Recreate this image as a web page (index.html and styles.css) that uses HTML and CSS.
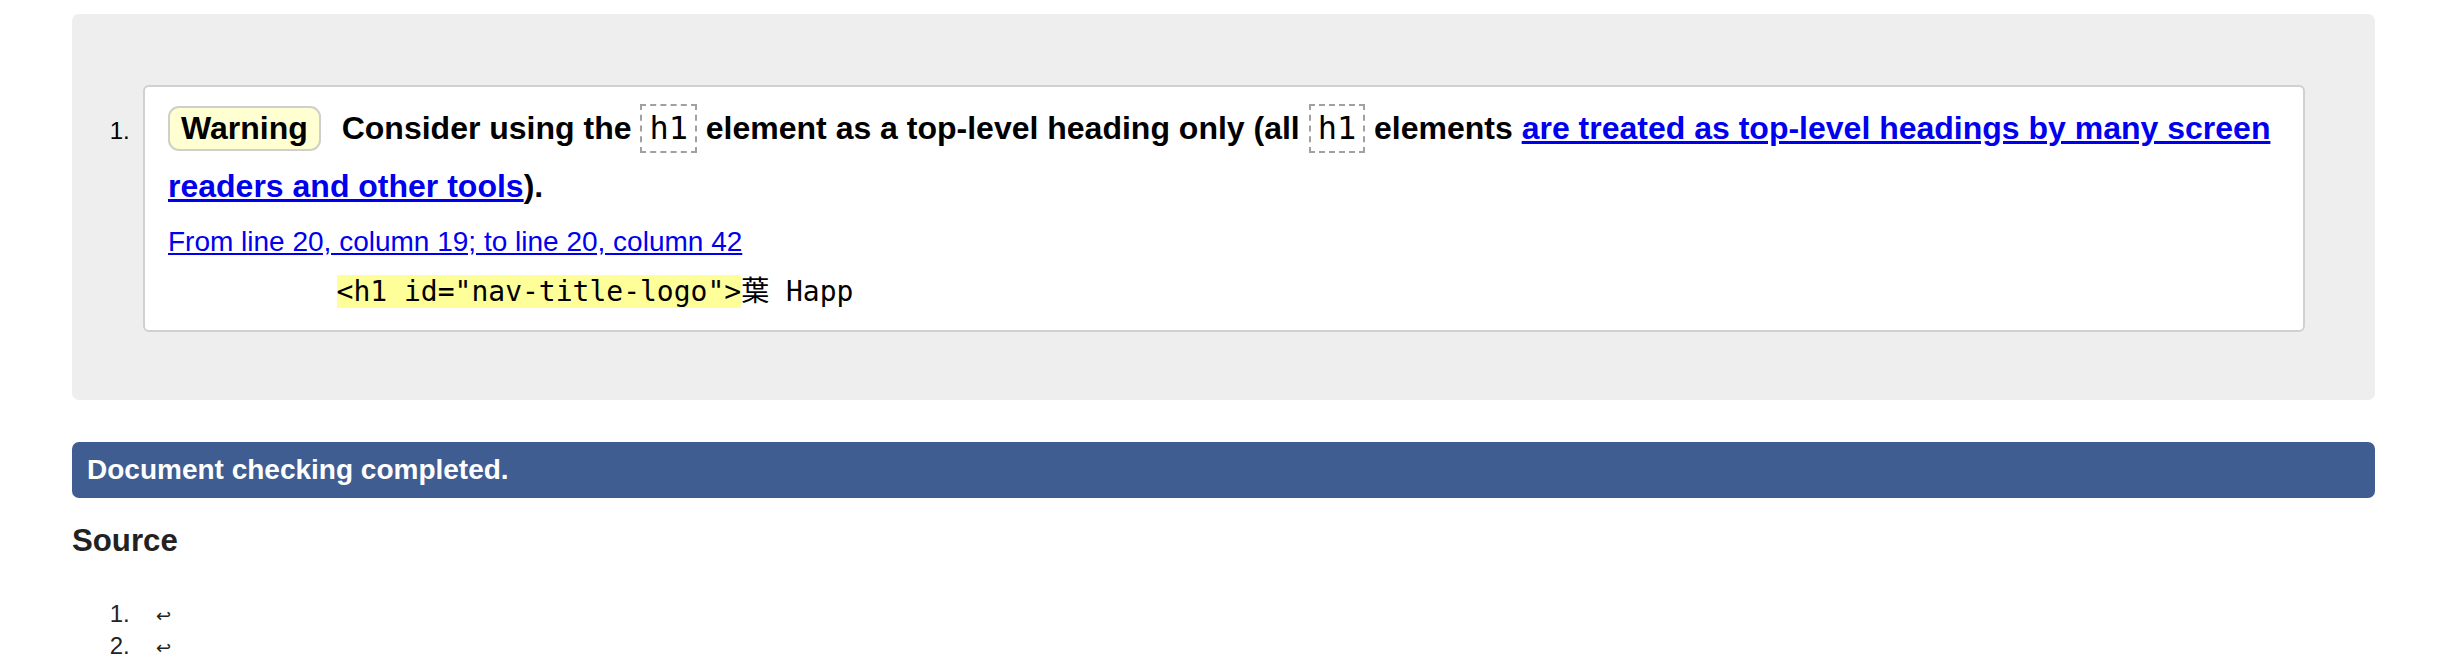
FILE: index.html
```html
<!DOCTYPE html>
<html lang="en">
<head>
<meta charset="utf-8">
<title>Nu Html Checker</title>
<link rel="stylesheet" href="styles.css">
</head>
<body>
<div class="results">
  <ol class="messages">
    <li class="warning">
      <p class="message"><span class="badge">Warning</span> <span class="text">Consider using the <code class="tag">h1</code> element as a top-level heading only (all <code class="tag">h1</code> elements <a href="#">are treated as top-level headings by many screen readers and other tools</a>).</span></p>
      <p class="location"><a href="#">From line 20, column 19; to line 20, column 42</a></p>
      <p class="extract"><code>          <b class="hl">&lt;h1 id="nav-title-logo"&gt;</b>葉 Happ</code></p>
    </li>
  </ol>
</div>
<p class="status">Document checking completed.</p>
<h2 class="source-title">Source</h2>
<ol class="source">
  <li><span class="nl">↩</span></li>
  <li><span class="nl">↩</span></li>
</ol>
</body>
</html>
```

FILE: styles.css
```css
html {
  background: #fff;
}

body {
  margin: 14px 72px 0;
  font-family: "Liberation Sans", Arial, Helvetica, sans-serif;
  font-size: 24px;
  color: #000;
}

.results {
  background: #eee;
  border-radius: 7px;
  padding: 71px 70px 68px 71px;
}

.messages {
  margin: 0;
  padding: 0;
  list-style: decimal outside;
}

.messages > li::marker,
.source > li::marker {
  content: counter(list-item) ".\00a0\00a0";
  font-size: 24px;
}

.messages > li {
  background: #fff;
  border: 2px solid #d0d0d0;
  border-radius: 6px;
  padding: 13px 23px 21px 23px;
}

.message {
  margin: 0;
  font-size: 32px;
  font-weight: bold;
  line-height: 57.6px;
}

.badge {
  background: #ffffd2;
  border: 2px solid #cfcfcf;
  border-radius: 11px;
  padding: 2px 11px 3px 11px;
  margin-right: 12px;
}

.text a {
  color: #0000ee;
}

.tag {
  font-family: "DejaVu Sans Mono", Menlo, monospace;
  font-weight: normal;
  font-size: 32px;
  border: 2px dashed #a0a0a0;
  padding: 3px 7px 4px;
}

.location {
  margin: 11px 0 0;
  font-size: 28px;
}

.location a {
  color: #0000ee;
}

.extract {
  margin: 17px 0 0;
  line-height: 33px;
}

.extract code {
  font-family: "DejaVu Sans Mono", Menlo, "Noto Sans CJK JP", monospace;
  font-size: 28px;
  white-space: pre;
}

.hl {
  font-weight: normal;
  background: #ffff9a;
}

.status {
  margin: 42px 0 0;
  background: #3f5d90;
  color: #fff;
  font-weight: bold;
  font-size: 28px;
  padding: 12px 15px;
  border-radius: 7px;
}

.source-title {
  margin: 25px 0 0;
  font-size: 31.2px;
  font-weight: bold;
  color: #222;
}

.source {
  margin: 40px 0 0;
  padding: 0 0 0 71px;
  color: #222;
  line-height: 29.5px;
}

.nl {
  font-family: "DejaVu Sans", sans-serif;
  font-size: 18px;
  margin-left: 13px;
}
```
